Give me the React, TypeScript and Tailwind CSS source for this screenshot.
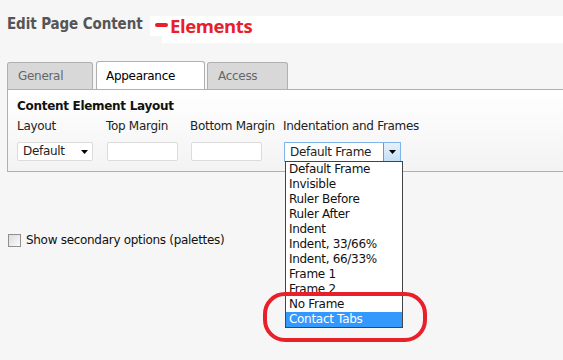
import React from "react";

const frames = [
  "Default Frame",
  "Invisible",
  "Ruler Before",
  "Ruler After",
  "Indent",
  "Indent, 33/66%",
  "Indent, 66/33%",
  "Frame 1",
  "Frame 2",
  "No Frame",
  "Contact Tabs",
];

function Caret() {
  return (
    <svg width="7" height="4" viewBox="0 0 7 4" className="block">
      <path d="M0 0h7L3.5 4z" fill="#000" />
    </svg>
  );
}

export default function App() {
  return (
    <div className="relative h-[360px] w-[563px] overflow-hidden bg-[#f6f6f6] font-['DejaVu_Sans',Verdana,sans-serif] text-[12px] tracking-[-0.3px] text-[#111]">
      {/* heading */}
      <div className="pl-[7px] pt-[14px] font-['DejaVu_Sans_Condensed','Open_Sans',sans-serif] text-[15px] font-bold leading-[20px] tracking-[-0.1px] text-[#555]">
        Edit Page Content
      </div>

      {/* annotation label */}
      <div className="absolute left-[150px] top-[16px] h-[20px] w-[20px] bg-white" />
      <div className="absolute left-[162px] top-[16px] h-[27px] w-[401px] bg-white" />
      <div className="absolute left-[155px] top-[23px] h-[4px] w-[13px] rounded-full bg-[#e8202a]" />
      <div className="absolute left-[170px] top-[13px] font-['Open_Sans',sans-serif] text-[18.5px] font-bold leading-[25px] tracking-[-0.4px] text-[#e8202a]">
        Elements
      </div>

      {/* tabs */}
      <div className="mt-[28px] flex h-[27px] items-end pl-[7px]">
        <div className="flex h-[27px] w-[86px] items-center rounded-t-[3px] border border-b-0 border-[#b0b0b0] bg-[#d8d8d8] pl-[10px] text-[#666]">
          General
        </div>
        <div className="relative z-10 ml-[3px] flex h-[28px] w-[109px] items-center rounded-t-[3px] border border-b-0 border-[#b0b0b0] bg-white pl-[9px] text-[#000]">
          Appearance
        </div>
        <div className="ml-[2px] flex h-[27px] w-[81px] items-center rounded-t-[3px] border border-b-0 border-[#b0b0b0] bg-[#d8d8d8] pl-[10px] text-[#666]">
          Access
        </div>
      </div>

      {/* panel */}
      <div className="relative ml-[7px] h-[83px] border border-r-0 border-[#b0b0b0] bg-gradient-to-b from-white to-[#f3f3f3] pl-[9px] pt-[9px]">
        <div className="font-bold leading-[15px] text-[#111]">Content Element Layout</div>
        <div className="mt-[5px] flex leading-[15px] text-[#222]">
          <div className="w-[89px]">
            <div>Layout</div>
            <div className="mt-[8px] flex h-[19px] w-[76px] items-center justify-between rounded-[2px] border border-[#dcdcdc] bg-white pl-[5px] pr-[4px]">
              <span>Default</span>
              <Caret />
            </div>
          </div>
          <div className="w-[84px]">
            <div>Top Margin</div>
            <div className="mt-[8px] ml-[1px] h-[19px] w-[71px] rounded-[2px] border border-[#dcdcdc] bg-white" />
          </div>
          <div className="w-[93px]">
            <div>Bottom Margin</div>
            <div className="mt-[8px] ml-[1px] h-[19px] w-[71px] rounded-[2px] border border-[#dcdcdc] bg-white" />
          </div>
          <div>
            <div>Indentation and Frames</div>
            <div className="relative mt-[8px] ml-[1px] flex h-[20px] w-[117px] items-stretch border border-[#7eb4ea] bg-white">
              <span className="flex flex-1 items-center pl-[5px]">Default Frame</span>
              <span className="flex w-[17px] items-center justify-center border-l border-[#5e9bd6] bg-gradient-to-b from-[#e6f1fc] to-[#c4dff6]">
                <Caret />
              </span>
              <div className="absolute left-[0px] top-[18px] z-20 w-[118px] border border-[#444] bg-white">
                {frames.map((f) => (
                  <div
                    key={f}
                    className={
                      f === "Contact Tabs"
                        ? "h-[15px] bg-[#3399ff] pl-[3px] leading-[15px] text-white"
                        : "h-[15px] pl-[3px] leading-[15px] text-[#111]"
                    }
                  >
                    {f}
                  </div>
                ))}
              </div>
            </div>
          </div>
        </div>
      </div>

      {/* checkbox */}
      <div className="mt-[61px] flex items-center pl-[8px] leading-[15px] text-[#111]">
        <span className="h-[13px] w-[13px] border border-[#8f8f8f] bg-gradient-to-br from-[#dcdcdc] to-[#fbfbfb]" />
        <span className="ml-[5px]">Show secondary options (palettes)</span>
      </div>

      {/* highlight ring */}
      <div className="absolute left-[263px] top-[292px] z-30 h-[50px] w-[164px] rounded-[22px] border-4 border-[#e8202a]" />
    </div>
  );
}
